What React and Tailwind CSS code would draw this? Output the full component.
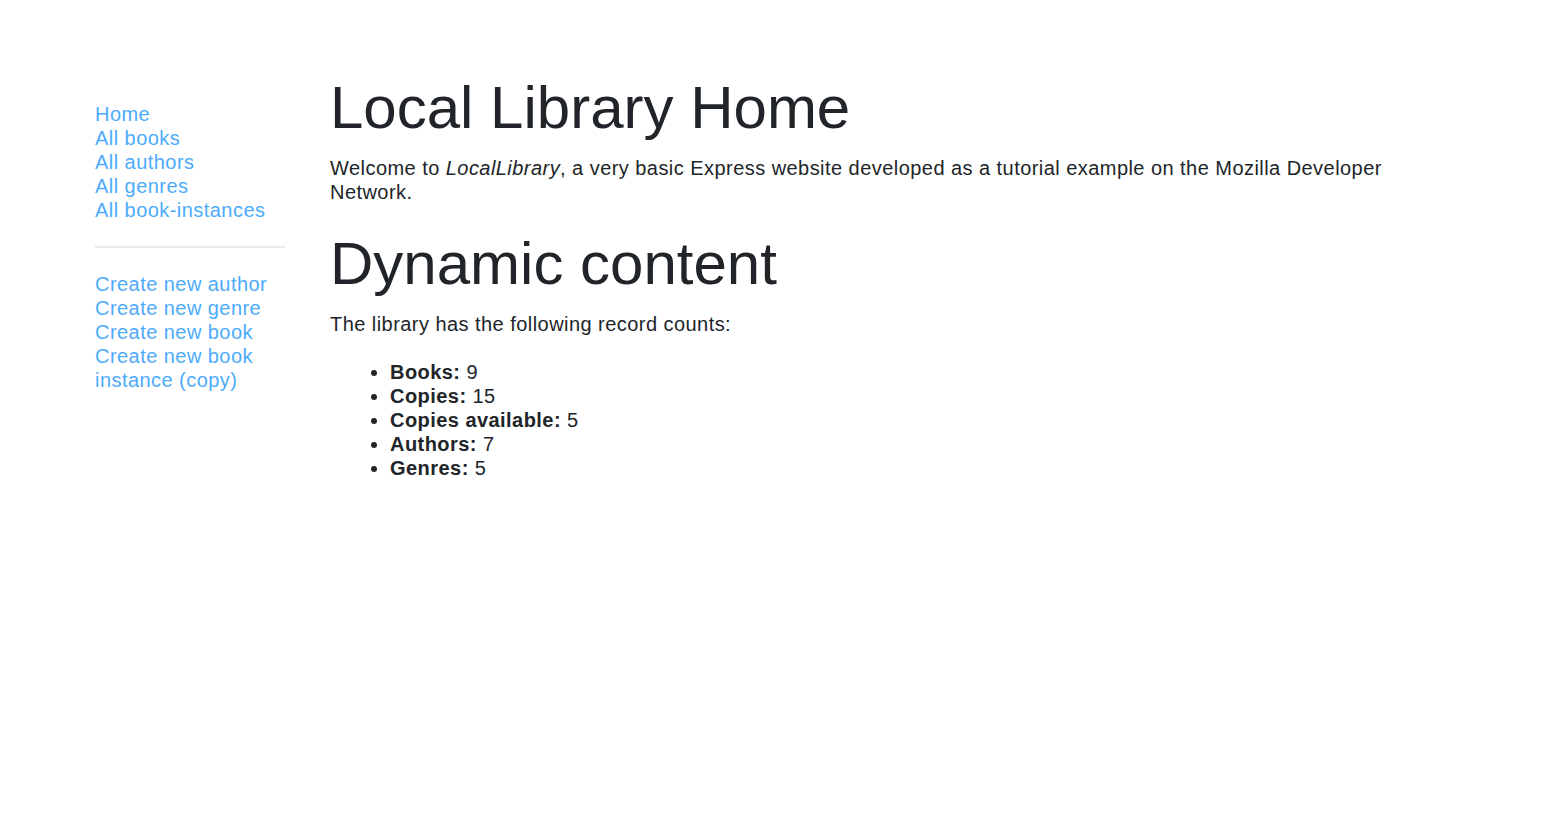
const navTop = ['Home', 'All books', 'All authors', 'All genres', 'All book-instances'];
const navCreate = ['Create new author', 'Create new genre', 'Create new book', 'Create new book instance (copy)'];

const counts = [
  ['Books:', 9],
  ['Copies:', 15],
  ['Copies available:', 5],
  ['Authors:', 7],
  ['Genres:', 5],
];

export default function App() {
  return (
    <div className="min-h-[826px] bg-white font-['Liberation_Sans',Arial,sans-serif] text-[20px] leading-[24px] tracking-[0.45px] text-[#212529]">
      <div className="flex pl-[95px] pt-[72px]">
        <div className="w-[190px] shrink-0 pt-[30px]">
          <ul className="list-none">
            {navTop.map((l) => (
              <li key={l}>
                <a href="#" className="text-[#4dabfc]">{l}</a>
              </li>
            ))}
          </ul>
          <hr className="my-[24px] border-t-2 border-[#e9ecef]" />
          <ul className="list-none">
            {navCreate.map((l) => (
              <li key={l}>
                <a href="#" className="text-[#4dabfc]">{l}</a>
              </li>
            ))}
          </ul>
        </div>
        <div className="ml-[45px] w-[1130px]">
          <h1 className="mb-[12px] text-[60px] leading-[72px] font-normal tracking-normal">Local Library Home</h1>
          <p className="mb-[24px]">
            Welcome to <em>LocalLibrary</em>, a very basic Express website developed as a tutorial example on the Mozilla Developer Network.
          </p>
          <h1 className="mb-[12px] text-[60px] leading-[72px] font-normal tracking-normal">Dynamic content</h1>
          <p className="mb-[24px]">The library has the following record counts:</p>
          <ul className="list-disc pl-[60px]">
            {counts.map(([k, v]) => (
              <li key={k}>
                <strong className="font-bold">{k}</strong> {v}
              </li>
            ))}
          </ul>
        </div>
      </div>
    </div>
  );
}
